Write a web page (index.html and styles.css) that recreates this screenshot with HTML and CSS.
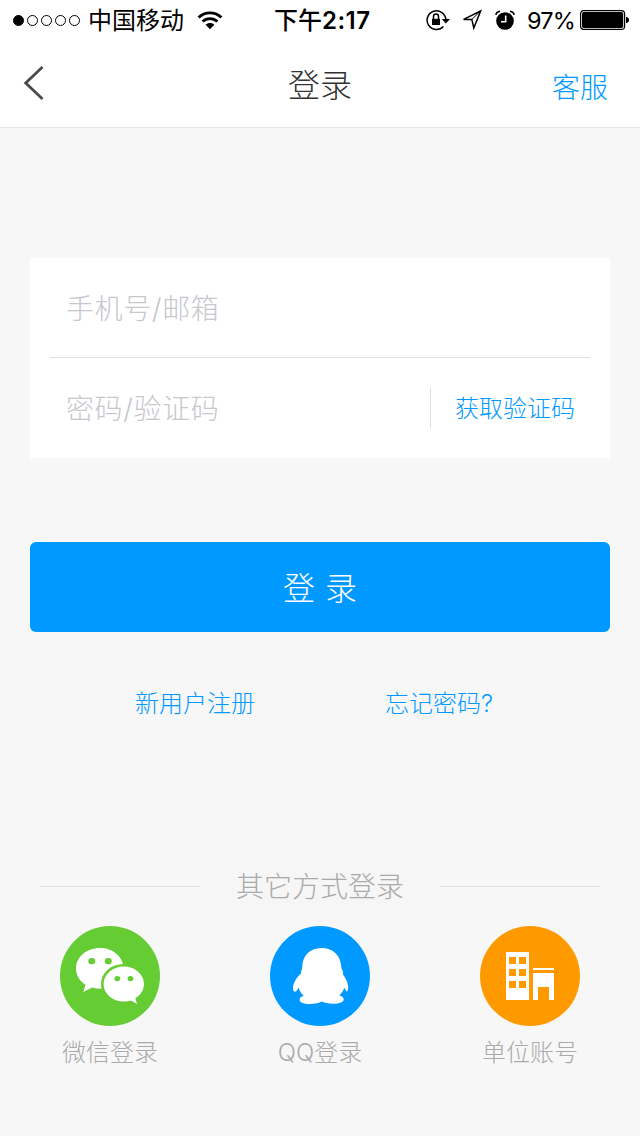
FILE: index.html
```html
<!DOCTYPE html>
<html lang="zh-CN">
<head>
    <meta charset="UTF-8">
    <meta name="viewport" content="width=device-width, initial-scale=1.0">
    <title>登录</title>
    <link rel="stylesheet" href="styles.css">
</head>
<body>
    <div class="status-bar">
        <div class="status-left">
            <div class="signal">
                <span class="dot full"></span>
                <span class="dot"></span>
                <span class="dot"></span>
                <span class="dot"></span>
                <span class="dot"></span>
            </div>
            <span class="carrier">中国移动</span>
            <svg class="wifi" width="26" height="19" viewBox="0 0 26 19">
                <path d="M1.6 6.6C8 .4 18 .4 24.4 6.6M5.6 10.6C9.8 6.6 16.2 6.6 20.4 10.6" fill="none" stroke="#000" stroke-width="2.8"/>
                <path d="M8.6 13.8C11.2 11.4 14.8 11.4 17.4 13.8L13 18.2Z"/>
            </svg>
        </div>
        <div class="time"><span>下午</span>2:17</div>
        <div class="status-right">
            <svg class="lock" width="24" height="22" viewBox="0 0 24 22">
                <path d="M17.4 17.6A9.4 9.4 0 1 1 19.9 10.8" fill="none" stroke="#000" stroke-width="1.5"/>
                <path d="M15.8 10H24L19.9 14.4Z"/>
                <rect x="6" y="9.8" width="8" height="6.2"/>
                <path d="M7.5 10V7.6a2.5 2.5 0 0 1 5 0V10" fill="none" stroke="#000" stroke-width="1.5"/>
            </svg>
            <svg class="location" width="22" height="22" viewBox="0 0 22 22">
                <path d="M19.6 2L2.6 10.4H10.8L12.8 19Z" fill="none" stroke="#000" stroke-width="1.5"/>
                <path d="M19.6 2L10.8 10.4" stroke="#000" stroke-width="1"/>
            </svg>
            <svg class="alarm" width="20" height="20" viewBox="0 0 20 20">
                <circle cx="10" cy="11" r="8.8"/>
                <path d="M.8 4.8Q1.4 1.6 5 1.2M19.2 4.8Q18.6 1.6 15 1.2" fill="none" stroke="#000" stroke-width="1.5"/>
                <path d="M10.7 5.4V11.8H6" fill="none" stroke="#fff" stroke-width="1.6"/>
            </svg>
            <span class="percent">97%</span>
            <svg class="battery" width="50" height="20" viewBox="0 0 50 20">
                <rect x=".6" y=".6" width="44" height="18.8" rx="3.2" fill="none" stroke="#000" stroke-width="1.2"/>
                <rect x="2" y="2" width="41.2" height="16" rx="1.8"/>
                <path d="M46 6.8Q49 7.4 49 10T46 13.2Z"/>
            </svg>
        </div>
    </div>

    <div class="header">
        <a class="back" href="#">
            <svg width="22" height="36" viewBox="0 0 22 36">
                <path d="M20.5 2L3.7 18L20.5 34" fill="none" stroke="#4a4a4a" stroke-width="2.8"/>
            </svg>
        </a>
        <h1>登录</h1>
        <a class="service" href="#">客服</a>
    </div>

    <div class="container">
        <form>
            <div class="fields">
                <div class="field">
                    <input type="text" placeholder="手机号/邮箱">
                </div>
                <div class="field code-field">
                    <input type="text" placeholder="密码/验证码">
                    <a class="get-code" href="#">获取验证码</a>
                </div>
            </div>
            <button type="button">登 录</button>
        </form>

        <div class="links">
            <a href="#">新用户注册</a>
            <a href="#">忘记密码?</a>
        </div>

        <div class="other-title"><span>其它方式登录</span></div>

        <div class="other">
            <a class="other-item" href="#">
                <svg width="100" height="100" viewBox="0 0 100 100">
                    <circle cx="50" cy="50" r="50" fill="#6c3"/>
                    <path d="M40 22C26.5 22 16 31 16 42.5C16 49 19.5 55 25.5 58.8L23.2 66L32 61.6C35 62.6 38 63 42 62.6L63.5 41C62.5 30 52.5 22 40 22Z" fill="#fff"/>
                    <ellipse cx="63.5" cy="58" rx="22.5" ry="20" fill="#6c3"/>
                    <path d="M63.8 40.6C52.5 40.6 43.6 48.5 43.6 58C43.6 67.8 52.5 75.6 63.8 75.6C66.5 75.6 68.8 75.3 71 74.6L77 78L75.3 72.3C80.8 69 84 63.7 84 58C84 48.5 75 40.6 63.8 40.6Z" fill="#fff"/>
                    <g fill="#6c3">
                        <ellipse cx="31.8" cy="35.2" rx="3.5" ry="3.1"/>
                        <ellipse cx="48.3" cy="35.2" rx="3.5" ry="3.1"/>
                        <ellipse cx="57.3" cy="52.6" rx="2.9" ry="2.6"/>
                        <ellipse cx="70.5" cy="52.6" rx="2.9" ry="2.6"/>
                    </g>
                </svg>
                <span>微信登录</span>
            </a>
            <a class="other-item" href="#">
                <svg width="100" height="100" viewBox="0 0 100 100">
                    <circle cx="50" cy="50" r="50" fill="#09f"/>
                    <path d="M51.5 22C39 22 32.5 30.5 32.3 40.5C32.3 42.5 31 44.5 31 47.6C26.5 51.5 23 57.5 23 62C23 64.5 24 66.2 25.2 65.8C26.5 65.4 27.7 63.5 28.6 61.6C29.5 65 31.2 67.5 33.8 69.7C31 70.5 29.6 71.8 29.6 73.5C29.6 76.5 33.5 78 39.5 78C45.5 78 49.5 77 51.5 75.6C54 76.8 58 77.7 63.5 77.7C69.5 77.7 73.7 76 73.7 73.2C73.7 71.5 72 70.3 69.3 69.6C71.5 67.5 73.2 65 74.3 61.6C75.2 64 76.5 65.7 77.3 65.5C79.3 62 78 55 73 48.5C73.5 46.5 72.7 44.5 71.5 42.5C71 29.5 63.5 22 51.5 22Z" fill="#fff"/>
                </svg>
                <span>QQ登录</span>
            </a>
            <a class="other-item" href="#">
                <svg width="100" height="100" viewBox="0 0 100 100">
                    <circle cx="50" cy="50" r="50" fill="#f90"/>
                    <path d="M26 26H49V74H26ZM53 42H74V44H53ZM53 47H74V74H69V61H58V74H53Z" fill="#fff"/>
                    <path d="M29 31H36V38H29ZM39 31H46V38H39ZM29 43H36V50H29ZM39 43H46V50H39ZM29 55H36V62H29ZM39 55H46V62H39Z" fill="#f90"/>
                </svg>
                <span>单位账号</span>
            </a>
        </div>
    </div>
</body>
</html>
```
FILE: styles.css
```css
* {
    box-sizing: border-box;
}
body {
    font-family: Inter, "Noto Sans CJK SC", sans-serif;
    font-weight: 300;
    background-color: #f7f7f7;
    margin: 0;
    padding: 0;
}
a {
    color: #09f;
    text-decoration: none;
}
svg {
    display: block;
}
.status-bar {
    display: flex;
    align-items: center;
    height: 40px;
    background: #fff;
    color: #000;
    font-size: 24px;
    font-weight: 400;
    line-height: 40px;
    white-space: nowrap;
}
.status-left {
    display: flex;
    align-items: center;
    width: 274px;
    padding-left: 13px;
}
.signal {
    display: flex;
    gap: 3px;
    width: 75px;
}
.dot {
    width: 11px;
    height: 11px;
    border: 1px solid #000;
    border-radius: 50%;
}
.full {
    background: #000;
}
.carrier,
.time,
.percent {
    padding-top: 2px;
}
.wifi {
    margin-left: 13px;
}
.time {
    width: 98px;
    font-weight: 600;
    letter-spacing: 0.5px;
}
.time span {
    font-weight: 500;
    letter-spacing: 0;
}
.status-right {
    display: flex;
    align-items: center;
    padding-left: 54px;
}
.location {
    margin-left: 11px;
}
.alarm {
    margin-left: 12px;
}
.percent {
    margin-left: 12px;
    width: 53px;
    font-size: 23.5px;
    letter-spacing: -0.8px;
}
.header {
    display: grid;
    grid-template-columns: 1fr auto 1fr;
    align-items: center;
    height: 88px;
    padding: 0 32px 0 22px;
    background: #fff;
    border-bottom: 1px solid #e5e5e5;
}
.back {
    padding-bottom: 2px;
}
.header h1 {
    margin: 5px 0 0 10px;
    font-size: 32px;
    font-weight: 300;
    line-height: 40px;
    color: #333;
}
.service {
    padding-top: 8px;
    text-align: right;
    font-size: 28px;
    line-height: 40px;
}
.container {
    padding: 130px 30px 0;
}
.fields {
    height: 200px;
    padding: 0 20px;
    background: #fff;
}
.field {
    display: flex;
    align-items: center;
    height: 100px;
    border-bottom: 1px solid #e0e0e0;
}
.code-field {
    border-bottom: none;
}
input {
    flex: 1;
    min-width: 0;
    height: 60px;
    padding: 2px 16px 0;
    border: none;
    outline: none;
    background: none;
    font: inherit;
    font-size: 28px;
    letter-spacing: 0.6px;
}
input::placeholder {
    color: #c7c7cd;
}
.get-code {
    width: 160px;
    height: 40px;
    padding-left: 24px;
    border-left: 1px solid #e0e0e0;
    font-size: 24px;
    line-height: 42px;
}
button {
    display: block;
    width: 100%;
    height: 90px;
    margin-top: 84px;
    padding-bottom: 3px;
    border: none;
    border-radius: 6px;
    background: #09f;
    color: #fff;
    font: inherit;
    font-size: 32px;
    word-spacing: 1px;
}
.links {
    display: flex;
    gap: 130px;
    padding-left: 105px;
    margin-top: 52px;
    font-size: 24px;
    line-height: 40px;
}
.other-title {
    display: flex;
    align-items: center;
    margin: 142px 10px 0;
    font-size: 28px;
    line-height: 40px;
    color: #aaa;
}
.other-title::before,
.other-title::after {
    content: "";
    flex: 1;
    height: 1px;
    background: #e3e3e3;
}
.other-title span {
    width: 240px;
    height: 40px;
    background: #f6f6f6;
    line-height: 42px;
    text-align: center;
}
.other {
    display: flex;
    justify-content: space-between;
    margin: 20px 30px 0;
}
.other-item {
    display: flex;
    flex-direction: column;
    align-items: center;
    width: 100px;
    font-size: 24px;
    line-height: 40px;
    color: #aaa;
}
.other-item span {
    margin-top: 7px;
}
```
